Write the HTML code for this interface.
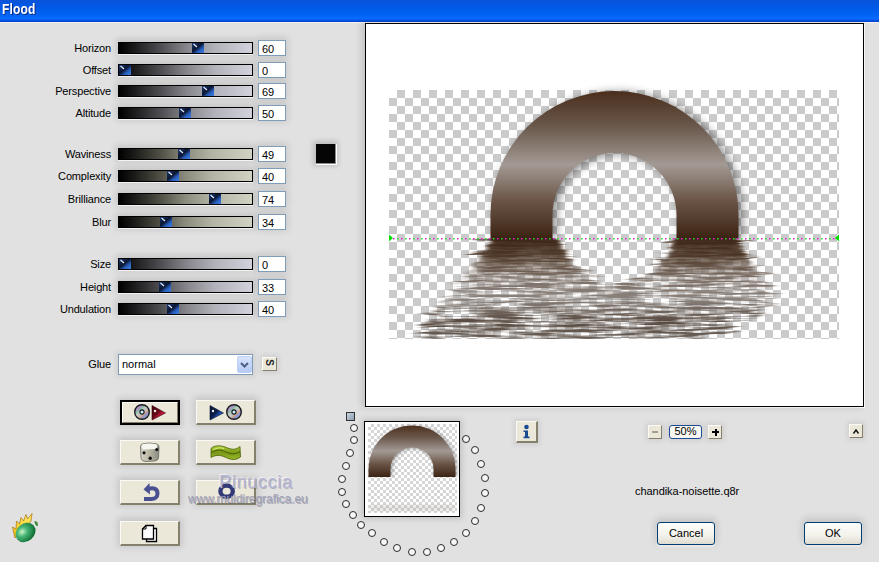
<!DOCTYPE html><html><head><meta charset="utf-8"><style>
*{box-sizing:border-box}
html,body{margin:0;padding:0;width:879px;height:562px;overflow:hidden;background:#e1e1e1;font-family:"Liberation Sans",sans-serif;font-size:11px;color:#000}
.a{position:absolute}
.lbl{position:absolute;text-align:right;width:100px;white-space:nowrap;letter-spacing:-0.15px}
.trk{position:absolute;left:118px;width:135px;height:12px;border:1px solid #000;box-shadow:0 1px 0 #f4f4f4,0 -1px 7px 2px rgba(0,0,0,0.13)}
.thumb{position:absolute;top:0;width:12px;height:10px}
.inp{position:absolute;left:258px;width:28px;height:16px;border:1px solid #7f9db9;background:#fff;padding-left:3px;line-height:16px;box-shadow:0 -1px 7px 2px rgba(0,0,0,0.11)}
.btn{position:absolute;width:60px;height:25px;background:#ebe8da;border-top:1px solid #fbfaf4;border-left:1px solid #fbfaf4;border-right:2px solid #85806c;border-bottom:2px solid #85806c;box-shadow:0 -1px 7px 2px rgba(0,0,0,0.13)}
.sb{position:absolute;width:14px;height:14px;background:#ebe8da;border-top:1px solid #fbfaf4;border-left:1px solid #fbfaf4;border-right:1px solid #85806c;border-bottom:1px solid #85806c;box-shadow:0 0 5px 2px rgba(0,0,0,0.08)}
.xpb{position:absolute;width:58px;height:23px;border:1px solid #003c74;border-radius:3px;background:linear-gradient(#fefefd,#f2f1ea 60%,#dedcd0);text-align:center;line-height:21px;font-size:11px;box-shadow:0 -2px 7px 2px rgba(0,0,0,0.12),0 2px 2px rgba(255,255,255,0.7)}
.dot{position:absolute;width:8.6px;height:8.6px;border:1.5px solid #2a2a2a;border-radius:50%;background:#f6f6f6}
</style></head><body>

<div class="a" style="left:0;top:0;width:879px;height:22px;background:linear-gradient(#0a54d8 0%,#0058e6 30%,#0062f2 65%,#0a6cff 85%,#003fc8 100%)"></div>
<div class="a" style="left:0;top:22px;width:879px;height:1px;background:#f4f1ee"></div>
<div class="a" style="left:2px;top:1px;font-size:14px;font-weight:bold;color:#fff;text-shadow:1px 1px 0 #0a2880;letter-spacing:0.2px;transform:scaleX(0.86);transform-origin:0 0">Flood</div>

<div class="lbl" style="left:11px;top:42px">Horizon</div>
<div class="trk" style="top:42px;background:linear-gradient(90deg,#000 0%,#1c1c1e 12%,#505054 32%,#88888e 52%,#b2b2ba 72%,#d2d2dc 100%)"><div class="thumb" style="left:73px"><svg width="12" height="10" viewBox="0 0 12 10" style="display:block"><defs><linearGradient id="tg" x1="0" y1="0" x2="1" y2="1"><stop offset="0" stop-color="#1a3a78"/><stop offset="0.45" stop-color="#0a1530"/><stop offset="0.7" stop-color="#2a60c0"/><stop offset="1" stop-color="#3a80e0"/></linearGradient></defs><rect width="12" height="10" fill="url(#tg)"/><line x1="1.5" y1="1" x2="5" y2="4" stroke="#e8eef8" stroke-width="1.2"/></svg></div></div>
<div class="inp" style="top:40px">60</div>
<div class="lbl" style="left:11px;top:64px">Offset</div>
<div class="trk" style="top:64px;background:linear-gradient(90deg,#000 0%,#1c1c1e 12%,#505054 32%,#88888e 52%,#b2b2ba 72%,#d2d2dc 100%)"><div class="thumb" style="left:0px"><svg width="12" height="10" viewBox="0 0 12 10" style="display:block"><defs><linearGradient id="tg" x1="0" y1="0" x2="1" y2="1"><stop offset="0" stop-color="#1a3a78"/><stop offset="0.45" stop-color="#0a1530"/><stop offset="0.7" stop-color="#2a60c0"/><stop offset="1" stop-color="#3a80e0"/></linearGradient></defs><rect width="12" height="10" fill="url(#tg)"/><line x1="1.5" y1="1" x2="5" y2="4" stroke="#e8eef8" stroke-width="1.2"/></svg></div></div>
<div class="inp" style="top:62px">0</div>
<div class="lbl" style="left:11px;top:85px">Perspective</div>
<div class="trk" style="top:85px;background:linear-gradient(90deg,#000 0%,#1c1c1e 12%,#505054 32%,#88888e 52%,#b2b2ba 72%,#d2d2dc 100%)"><div class="thumb" style="left:83px"><svg width="12" height="10" viewBox="0 0 12 10" style="display:block"><defs><linearGradient id="tg" x1="0" y1="0" x2="1" y2="1"><stop offset="0" stop-color="#1a3a78"/><stop offset="0.45" stop-color="#0a1530"/><stop offset="0.7" stop-color="#2a60c0"/><stop offset="1" stop-color="#3a80e0"/></linearGradient></defs><rect width="12" height="10" fill="url(#tg)"/><line x1="1.5" y1="1" x2="5" y2="4" stroke="#e8eef8" stroke-width="1.2"/></svg></div></div>
<div class="inp" style="top:83px">69</div>
<div class="lbl" style="left:11px;top:107px">Altitude</div>
<div class="trk" style="top:107px;background:linear-gradient(90deg,#000 0%,#1c1c1e 12%,#505054 32%,#88888e 52%,#b2b2ba 72%,#d2d2dc 100%)"><div class="thumb" style="left:60px"><svg width="12" height="10" viewBox="0 0 12 10" style="display:block"><defs><linearGradient id="tg" x1="0" y1="0" x2="1" y2="1"><stop offset="0" stop-color="#1a3a78"/><stop offset="0.45" stop-color="#0a1530"/><stop offset="0.7" stop-color="#2a60c0"/><stop offset="1" stop-color="#3a80e0"/></linearGradient></defs><rect width="12" height="10" fill="url(#tg)"/><line x1="1.5" y1="1" x2="5" y2="4" stroke="#e8eef8" stroke-width="1.2"/></svg></div></div>
<div class="inp" style="top:105px">50</div>
<div class="lbl" style="left:11px;top:148px">Waviness</div>
<div class="trk" style="top:148px;background:linear-gradient(90deg,#000 0%,#1c1c1a 12%,#525248 32%,#8c8c7e 50%,#b4b4a4 70%,#d2d2c2 100%)"><div class="thumb" style="left:59px"><svg width="12" height="10" viewBox="0 0 12 10" style="display:block"><defs><linearGradient id="tg" x1="0" y1="0" x2="1" y2="1"><stop offset="0" stop-color="#1a3a78"/><stop offset="0.45" stop-color="#0a1530"/><stop offset="0.7" stop-color="#2a60c0"/><stop offset="1" stop-color="#3a80e0"/></linearGradient></defs><rect width="12" height="10" fill="url(#tg)"/><line x1="1.5" y1="1" x2="5" y2="4" stroke="#e8eef8" stroke-width="1.2"/></svg></div></div>
<div class="inp" style="top:146px">49</div>
<div class="lbl" style="left:11px;top:170px">Complexity</div>
<div class="trk" style="top:170px;background:linear-gradient(90deg,#000 0%,#1c1c1a 12%,#525248 32%,#8c8c7e 50%,#b4b4a4 70%,#d2d2c2 100%)"><div class="thumb" style="left:48px"><svg width="12" height="10" viewBox="0 0 12 10" style="display:block"><defs><linearGradient id="tg" x1="0" y1="0" x2="1" y2="1"><stop offset="0" stop-color="#1a3a78"/><stop offset="0.45" stop-color="#0a1530"/><stop offset="0.7" stop-color="#2a60c0"/><stop offset="1" stop-color="#3a80e0"/></linearGradient></defs><rect width="12" height="10" fill="url(#tg)"/><line x1="1.5" y1="1" x2="5" y2="4" stroke="#e8eef8" stroke-width="1.2"/></svg></div></div>
<div class="inp" style="top:168px">40</div>
<div class="lbl" style="left:11px;top:193px">Brilliance</div>
<div class="trk" style="top:193px;background:linear-gradient(90deg,#000 0%,#1c1c1a 12%,#525248 32%,#8c8c7e 50%,#b4b4a4 70%,#d2d2c2 100%)"><div class="thumb" style="left:90px"><svg width="12" height="10" viewBox="0 0 12 10" style="display:block"><defs><linearGradient id="tg" x1="0" y1="0" x2="1" y2="1"><stop offset="0" stop-color="#1a3a78"/><stop offset="0.45" stop-color="#0a1530"/><stop offset="0.7" stop-color="#2a60c0"/><stop offset="1" stop-color="#3a80e0"/></linearGradient></defs><rect width="12" height="10" fill="url(#tg)"/><line x1="1.5" y1="1" x2="5" y2="4" stroke="#e8eef8" stroke-width="1.2"/></svg></div></div>
<div class="inp" style="top:191px">74</div>
<div class="lbl" style="left:11px;top:216px">Blur</div>
<div class="trk" style="top:216px;background:linear-gradient(90deg,#000 0%,#1c1c1a 12%,#525248 32%,#8c8c7e 50%,#b4b4a4 70%,#d2d2c2 100%)"><div class="thumb" style="left:41px"><svg width="12" height="10" viewBox="0 0 12 10" style="display:block"><defs><linearGradient id="tg" x1="0" y1="0" x2="1" y2="1"><stop offset="0" stop-color="#1a3a78"/><stop offset="0.45" stop-color="#0a1530"/><stop offset="0.7" stop-color="#2a60c0"/><stop offset="1" stop-color="#3a80e0"/></linearGradient></defs><rect width="12" height="10" fill="url(#tg)"/><line x1="1.5" y1="1" x2="5" y2="4" stroke="#e8eef8" stroke-width="1.2"/></svg></div></div>
<div class="inp" style="top:214px">34</div>
<div class="lbl" style="left:11px;top:258px">Size</div>
<div class="trk" style="top:258px;background:linear-gradient(90deg,#000 0%,#1c1c1e 12%,#505054 32%,#88888e 52%,#b2b2ba 72%,#d2d2dc 100%)"><div class="thumb" style="left:0px"><svg width="12" height="10" viewBox="0 0 12 10" style="display:block"><defs><linearGradient id="tg" x1="0" y1="0" x2="1" y2="1"><stop offset="0" stop-color="#1a3a78"/><stop offset="0.45" stop-color="#0a1530"/><stop offset="0.7" stop-color="#2a60c0"/><stop offset="1" stop-color="#3a80e0"/></linearGradient></defs><rect width="12" height="10" fill="url(#tg)"/><line x1="1.5" y1="1" x2="5" y2="4" stroke="#e8eef8" stroke-width="1.2"/></svg></div></div>
<div class="inp" style="top:256px">0</div>
<div class="lbl" style="left:11px;top:281px">Height</div>
<div class="trk" style="top:281px;background:linear-gradient(90deg,#000 0%,#1c1c1e 12%,#505054 32%,#88888e 52%,#b2b2ba 72%,#d2d2dc 100%)"><div class="thumb" style="left:40px"><svg width="12" height="10" viewBox="0 0 12 10" style="display:block"><defs><linearGradient id="tg" x1="0" y1="0" x2="1" y2="1"><stop offset="0" stop-color="#1a3a78"/><stop offset="0.45" stop-color="#0a1530"/><stop offset="0.7" stop-color="#2a60c0"/><stop offset="1" stop-color="#3a80e0"/></linearGradient></defs><rect width="12" height="10" fill="url(#tg)"/><line x1="1.5" y1="1" x2="5" y2="4" stroke="#e8eef8" stroke-width="1.2"/></svg></div></div>
<div class="inp" style="top:279px">33</div>
<div class="lbl" style="left:11px;top:303px">Undulation</div>
<div class="trk" style="top:303px;background:linear-gradient(90deg,#000 0%,#1c1c1e 12%,#505054 32%,#88888e 52%,#b2b2ba 72%,#d2d2dc 100%)"><div class="thumb" style="left:48px"><svg width="12" height="10" viewBox="0 0 12 10" style="display:block"><defs><linearGradient id="tg" x1="0" y1="0" x2="1" y2="1"><stop offset="0" stop-color="#1a3a78"/><stop offset="0.45" stop-color="#0a1530"/><stop offset="0.7" stop-color="#2a60c0"/><stop offset="1" stop-color="#3a80e0"/></linearGradient></defs><rect width="12" height="10" fill="url(#tg)"/><line x1="1.5" y1="1" x2="5" y2="4" stroke="#e8eef8" stroke-width="1.2"/></svg></div></div>
<div class="inp" style="top:301px">40</div>
<div class="a" style="left:316px;top:144px;width:21px;height:21px;background:#fff;box-shadow:-1px -1px 5px 2px rgba(0,0,0,0.16)"><div style="width:20px;height:20px;background:#050505;border-right:1px solid #8a8a8a;border-bottom:1px solid #8a8a8a"></div></div>
<div class="lbl" style="left:11px;top:358px">Glue</div>
<div class="a" style="left:118px;top:354px;width:135px;height:21px;border:1px solid #7f9db9;background:#fff;box-shadow:0 0 5px 2px rgba(0,0,0,0.08)">
<div class="a" style="left:3px;top:3px">normal</div>
<div class="a" style="left:118px;top:1px;width:15px;height:17px;background:linear-gradient(#d8e4fc,#b4c8f4);border:1px solid #bcd0f8;border-radius:2px">
<svg width="15" height="17" style="position:absolute;left:-1px;top:-1px"><polyline points="4,7 7.5,10.5 11,7" fill="none" stroke="#4d6185" stroke-width="2"/></svg></div></div>
<div class="sb" style="left:262px;top:357px;width:15px;height:14px"><div style="position:absolute;left:3px;top:-1px;font-size:10px;font-weight:bold;transform:rotate(90deg);color:#222">S</div></div>
<div class="a" style="left:120px;top:400px;width:60px;height:25px;border:2px solid #000;box-shadow:0 0 6px 2px rgba(0,0,0,0.12)"><div class="btn" style="left:0;top:0;width:56px;height:21px;box-shadow:none;border-right-width:1px;border-bottom-width:1px"></div></div>
<div class="btn" style="left:196px;top:400px;"></div>
<div class="btn" style="left:120px;top:440px;"></div>
<div class="btn" style="left:196px;top:440px;"></div>
<div class="btn" style="left:120px;top:480px;"></div>
<div class="btn" style="left:196px;top:480px;"></div>
<div class="btn" style="left:120px;top:521px;"></div>
<svg class="a" style="left:0;top:0" width="879" height="562">
<defs>
<linearGradient id="cdr" x1="0.15" y1="0.1" x2="0.85" y2="0.9">
<stop offset="0" stop-color="#a8a8b4"/><stop offset="0.2" stop-color="#b090c8"/><stop offset="0.3" stop-color="#80c8a0"/><stop offset="0.4" stop-color="#c8c8c4"/>
<stop offset="0.6" stop-color="#c0c0c0"/><stop offset="0.7" stop-color="#d8a080"/><stop offset="0.8" stop-color="#8898d8"/><stop offset="1" stop-color="#a0a0a8"/></linearGradient>
<linearGradient id="trr" x1="0" y1="0" x2="1" y2="1"><stop offset="0" stop-color="#3a0008"/><stop offset="0.45" stop-color="#6a0818"/><stop offset="0.65" stop-color="#c01838"/><stop offset="1" stop-color="#e03050"/></linearGradient>
<linearGradient id="trb" x1="0" y1="0" x2="1" y2="1"><stop offset="0" stop-color="#081838"/><stop offset="0.45" stop-color="#0a1c48"/><stop offset="0.65" stop-color="#2050b0"/><stop offset="1" stop-color="#3070d0"/></linearGradient>
<linearGradient id="dice" x1="0" y1="0" x2="1" y2="0"><stop offset="0" stop-color="#d8d6cc"/><stop offset="0.5" stop-color="#b8b4a0"/><stop offset="1" stop-color="#8a8a84"/></linearGradient>
<linearGradient id="wv" x1="0" y1="0" x2="0" y2="1"><stop offset="0" stop-color="#b0d038"/><stop offset="0.5" stop-color="#7a9818"/><stop offset="1" stop-color="#98b828"/></linearGradient>
<radialGradient id="egg" cx="0.4" cy="0.35" r="0.7"><stop offset="0" stop-color="#d0f4c8"/><stop offset="0.35" stop-color="#48b878"/><stop offset="1" stop-color="#086428"/></radialGradient>
<linearGradient id="flame" x1="0" y1="0" x2="0" y2="1"><stop offset="0" stop-color="#fff070"/><stop offset="1" stop-color="#f0b800"/></linearGradient>
</defs>
<circle cx="142" cy="412" r="7.2" fill="#b8b8bc"/><circle cx="142" cy="412" r="7.2" fill="url(#cdr)"/><circle cx="142" cy="412" r="7.3" fill="none" stroke="#1a1a1e" stroke-width="1.4"/><circle cx="142" cy="412" r="2.1" fill="#cfeff8" stroke="#101820" stroke-width="1.1"/>
<path d="M152,405.5 L165.5,413 L152,420 Z" fill="url(#trr)" stroke="#3a0010" stroke-width="0.6"/>
<circle cx="155" cy="411" r="1.2" fill="#f0f0f0"/>
<path d="M210,405.5 L223.5,413 L210,420 Z" fill="url(#trb)" stroke="#0a1430" stroke-width="0.6"/>
<circle cx="213" cy="411" r="1.2" fill="#f0f0f0"/>
<circle cx="234" cy="412" r="7.2" fill="#b8b8bc"/><circle cx="234" cy="412" r="7.2" fill="url(#cdr)"/><circle cx="234" cy="412" r="7.3" fill="none" stroke="#1a1a1e" stroke-width="1.4"/><circle cx="234" cy="412" r="2.1" fill="#cfeff8" stroke="#101820" stroke-width="1.1"/>
<path d="M142,444 Q149,442 157,444 Q159.5,445 159,448 L158.5,458 Q158,460.5 155,461 L146,461.5 Q141.5,461.5 141,458 L140.5,447 Q140.5,444.5 142,444 Z" fill="url(#dice)" stroke="#6a6a60" stroke-width="0.8"/>
<path d="M142,444.5 Q149,442.5 157,444.5 Q158,446 156,449 L143,449.5 Q141,447 142,444.5 Z" fill="#f6f6f0"/>
<circle cx="144" cy="452.8" r="1.6" fill="#111"/><circle cx="150.2" cy="458.2" r="1.7" fill="#111"/><circle cx="156.8" cy="449.6" r="1.6" fill="#111"/>
<path d="M211,448.5 C214,445.5 219,445 225,447 C230,449 235,451 240,446.5 L240.5,457 C236,460.5 231,460 226,457.5 C220,454.5 215,455 211,457.5 Z" fill="url(#wv)" stroke="#4a6008" stroke-width="0.8"/>
<path d="M211.5,452.5 C216,449.5 221,449.5 226,452 C231,454.5 235,455 240,451.5" fill="none" stroke="#506a08" stroke-width="1.1"/>
<path d="M213,450 C217,447.5 221,447.5 224,448.5" fill="none" stroke="#d8f080" stroke-width="1"/>
<path d="M149.5,483 L143.5,489.5 L150,494.5 Z" fill="#4a5090"/>
<path d="M147.5,489.5 C154,486.5 157.5,489.5 157.5,493.5 C157.5,497 155,499 151.5,499 L144,499" fill="none" stroke="#4a5090" stroke-width="4"/>
<ellipse cx="226.6" cy="491.2" rx="6.2" ry="5.6" fill="none" stroke="#343a78" stroke-width="4.4"/>
<path d="M146.5,528.5 L156.5,528.5 L156.5,541.5 L146.5,541.5 Z" fill="#fff" stroke="#000" stroke-width="1.3"/>
<path d="M142.5,529 L146,525.5 L153.5,525.5 L153.5,539 L142.5,539 Z" fill="#fff" stroke="#000" stroke-width="1.3"/>
<path d="M142.5,529 L146,529 L146,525.5" fill="none" stroke="#000" stroke-width="1"/>
<path d="M15,538 L12.5,527 L16,529 L16.5,521 L19.5,524 L21,517.5 L23.5,521 L26,514.5 L27.5,519 L32,513.5 L31,521 L26,527 Z" fill="url(#flame)" stroke="#a87008" stroke-width="0.7"/>
<ellipse cx="25.5" cy="532.5" rx="10.8" ry="8.8" transform="rotate(-40 25.5 532.5)" fill="url(#egg)"/>
<path d="M34.5,521 C37.5,521 38.5,524 37.5,526.5 C35.5,525.5 34.5,523.5 34.5,521Z" fill="#3a8a30"/>
</svg>
<div class="a" style="left:219px;top:472px;font-size:18px;color:#b4b4d4;letter-spacing:0.7px;text-shadow:1px 1px 0 rgba(90,90,110,0.35),-1px -1px 1px rgba(255,255,255,0.6)">Pinuccia</div>
<div class="a" style="left:188px;top:492px;font-size:12px;color:#a0a0b8;letter-spacing:-0.05px;text-shadow:1px 1px 0 rgba(80,80,100,0.4)">www.muldiregrafica.eu</div>
<div class="dot" style="left:349.7px;top:423.7px"></div>
<div class="dot" style="left:349.7px;top:435.7px"></div>
<div class="dot" style="left:345.7px;top:448.7px"></div>
<div class="dot" style="left:341.7px;top:461.7px"></div>
<div class="dot" style="left:337.7px;top:474.7px"></div>
<div class="dot" style="left:337.7px;top:487.7px"></div>
<div class="dot" style="left:341.7px;top:499.7px"></div>
<div class="dot" style="left:348.7px;top:510.7px"></div>
<div class="dot" style="left:356.7px;top:520.7px"></div>
<div class="dot" style="left:367.7px;top:528.7px"></div>
<div class="dot" style="left:379.7px;top:537.7px"></div>
<div class="dot" style="left:392.7px;top:543.7px"></div>
<div class="dot" style="left:407.7px;top:547.7px"></div>
<div class="dot" style="left:422.7px;top:547.7px"></div>
<div class="dot" style="left:436.7px;top:543.7px"></div>
<div class="dot" style="left:449.7px;top:537.7px"></div>
<div class="dot" style="left:461.7px;top:528.7px"></div>
<div class="dot" style="left:470.7px;top:516.7px"></div>
<div class="dot" style="left:476.7px;top:503.7px"></div>
<div class="dot" style="left:480.7px;top:488.7px"></div>
<div class="dot" style="left:480.7px;top:473.7px"></div>
<div class="dot" style="left:476.7px;top:459.7px"></div>
<div class="dot" style="left:470.7px;top:445.7px"></div>
<div class="dot" style="left:461.7px;top:434.7px"></div>
<div class="a" style="left:346px;top:412px;width:8.5px;height:8.5px;border:1px solid #333;background:linear-gradient(135deg,#c8d4e0,#8c9cb0)"></div>
<div class="a" style="left:365px;top:23px;width:499px;height:384px;border:1px solid #000;background:#fff;box-shadow:-3px 0 6px 1px rgba(0,0,0,0.12),1px 1px 0 #fff"></div>
<svg class="a" style="left:0;top:0" width="879" height="562">
<defs>
<pattern id="chk" x="389" y="90" width="16" height="16" patternUnits="userSpaceOnUse"><rect width="16" height="16" fill="#fff"/><rect x="8" y="0" width="8" height="8" fill="#cbcbcb"/><rect x="0" y="8" width="8" height="8" fill="#cbcbcb"/></pattern>
<linearGradient id="ag" gradientUnits="userSpaceOnUse" x1="0" y1="91" x2="0" y2="238">
<stop offset="0" stop-color="#4a2e1c"/><stop offset="0.25" stop-color="#6c5a4e"/><stop offset="0.5" stop-color="#a39a94"/><stop offset="0.75" stop-color="#6a5446"/><stop offset="1" stop-color="#3c2414"/></linearGradient>
<linearGradient id="rg" gradientUnits="userSpaceOnUse" x1="0" y1="238" x2="0" y2="339">
<stop offset="0" stop-color="#3c2414"/><stop offset="0.18" stop-color="#4e3828"/><stop offset="0.38" stop-color="#7a6c62"/><stop offset="0.6" stop-color="#8a827c"/><stop offset="0.82" stop-color="#5a4c42"/><stop offset="1" stop-color="#6a6058"/></linearGradient>
<linearGradient id="mg" gradientUnits="userSpaceOnUse" x1="0" y1="238" x2="0" y2="285"><stop offset="0" stop-color="#fff"/><stop offset="0.4" stop-color="#fff" stop-opacity="0.8"/><stop offset="1" stop-color="#fff" stop-opacity="0"/></linearGradient>
<mask id="tm" maskUnits="userSpaceOnUse" x="380" y="230" width="470" height="120"><rect x="380" y="238" width="470" height="60" fill="url(#mg)"/></mask>
<filter id="shd" x="-20%" y="-20%" width="140%" height="140%"><feGaussianBlur stdDeviation="5"/></filter>
<filter id="wave" x="-40%" y="-10%" width="180%" height="130%" color-interpolation-filters="sRGB">
<feTurbulence type="fractalNoise" baseFrequency="0.014 0.26" numOctaves="3" seed="5" result="t"/>
<feColorMatrix in="t" type="matrix" values="1 0 0 0 0  0 0 0 0 0.5  0 0 0 0 0  0 0 0 0 1" result="tm"/>
<feDisplacementMap in="SourceGraphic" in2="tm" scale="60" xChannelSelector="R" yChannelSelector="G" result="d"/>
<feGaussianBlur in="d" stdDeviation="3 0.5" result="b"/>
<feTurbulence type="fractalNoise" baseFrequency="0.025 0.4" numOctaves="2" seed="11" result="t2"/>
<feColorMatrix in="t2" type="matrix" values="0 0 0 0 0  0 0 0 0 0  0 0 0 0 0  3.0 0 0 0 -0.92" result="am"/>
<feComposite in="b" in2="am" operator="in"/>
</filter>
<filter id="wave2" x="-40%" y="-10%" width="180%" height="130%" color-interpolation-filters="sRGB">
<feTurbulence type="fractalNoise" baseFrequency="0.012 0.2" numOctaves="3" seed="8" result="t"/>
<feColorMatrix in="t" type="matrix" values="1 0 0 0 0  0 0 0 0 0.5  0 0 0 0 0  0 0 0 0 1" result="tm"/>
<feDisplacementMap in="SourceGraphic" in2="tm" scale="14" xChannelSelector="R" yChannelSelector="G" result="d"/>
<feGaussianBlur in="d" stdDeviation="2 0.5" result="b"/>
<feTurbulence type="fractalNoise" baseFrequency="0.03 0.4" numOctaves="2" seed="13" result="t2"/>
<feColorMatrix in="t2" type="matrix" values="0 0 0 0 0  0 0 0 0 0  0 0 0 0 0  0 0 0 0 1" result="am"/>
<feComposite in="b" in2="am" operator="in"/>
</filter>
<linearGradient id="lg" gradientUnits="userSpaceOnUse" x1="0" y1="238" x2="0" y2="292">
<stop offset="0" stop-color="#3a2212" stop-opacity="1"/><stop offset="0.5" stop-color="#4a3424" stop-opacity="0.85"/><stop offset="1" stop-color="#6a5a50" stop-opacity="0"/></linearGradient>
</defs>
<rect x="389" y="90" width="450" height="249" fill="url(#chk)"/>
<path d="M494.5,238 L494.5,216 A124,124 0 0 1 742.5,216 L742.5,238 L680.5,238 L680.5,216 A62,62 0 0 0 556.5,216 L556.5,238 Z" fill="#000" opacity="0.45" filter="url(#shd)"/>
<rect x="389" y="238" width="450" height="101" fill="url(#chk)"/>
<g mask="url(#tm)"><g filter="url(#wave2)"><path d="M491,238 L484,256 L462,278 L444,300 L428,320 L420,339 L705,339 L742,326 L772,306 L764,284 L748,260 L738,238 L675,238 L668,256 L652,274 L618,286 L590,279 L570,262 L556,238 Z" fill="url(#rg)"/></g></g>
<g filter="url(#wave)"><path d="M491,238 L484,256 L462,278 L444,300 L428,320 L420,339 L705,339 L742,326 L772,306 L764,284 L748,260 L738,238 L675,238 L668,256 L652,274 L618,286 L590,279 L570,262 L556,238 Z" fill="url(#rg)"/></g>
<path d="M490.5,238 L490.5,215 A124,124 0 0 1 738.5,215 L738.5,238 L676.5,238 L676.5,215 A62,62 0 0 0 552.5,215 L552.5,238 Z" fill="url(#ag)"/>
<rect x="393" y="238" width="1.5" height="1.5" fill="#e020e0"/><rect x="397" y="238" width="1.5" height="1.5" fill="#20e020"/><rect x="401" y="238" width="1.5" height="1.5" fill="#e020e0"/><rect x="405" y="238" width="1.5" height="1.5" fill="#20e020"/><rect x="409" y="238" width="1.5" height="1.5" fill="#e020e0"/><rect x="413" y="238" width="1.5" height="1.5" fill="#20e020"/><rect x="417" y="238" width="1.5" height="1.5" fill="#e020e0"/><rect x="421" y="238" width="1.5" height="1.5" fill="#20e020"/><rect x="425" y="238" width="1.5" height="1.5" fill="#e020e0"/><rect x="429" y="238" width="1.5" height="1.5" fill="#20e020"/><rect x="433" y="238" width="1.5" height="1.5" fill="#e020e0"/><rect x="437" y="238" width="1.5" height="1.5" fill="#20e020"/><rect x="441" y="238" width="1.5" height="1.5" fill="#e020e0"/><rect x="445" y="238" width="1.5" height="1.5" fill="#20e020"/><rect x="449" y="238" width="1.5" height="1.5" fill="#e020e0"/><rect x="453" y="238" width="1.5" height="1.5" fill="#20e020"/><rect x="457" y="238" width="1.5" height="1.5" fill="#e020e0"/><rect x="461" y="238" width="1.5" height="1.5" fill="#20e020"/><rect x="465" y="238" width="1.5" height="1.5" fill="#e020e0"/><rect x="469" y="238" width="1.5" height="1.5" fill="#20e020"/><rect x="473" y="238" width="1.5" height="1.5" fill="#e020e0"/><rect x="477" y="238" width="1.5" height="1.5" fill="#20e020"/><rect x="481" y="238" width="1.5" height="1.5" fill="#e020e0"/><rect x="485" y="238" width="1.5" height="1.5" fill="#20e020"/><rect x="489" y="238" width="1.5" height="1.5" fill="#e020e0"/><rect x="493" y="238" width="1.5" height="1.5" fill="#20e020"/><rect x="497" y="238" width="1.5" height="1.5" fill="#e020e0"/><rect x="501" y="238" width="1.5" height="1.5" fill="#20e020"/><rect x="505" y="238" width="1.5" height="1.5" fill="#e020e0"/><rect x="509" y="238" width="1.5" height="1.5" fill="#20e020"/><rect x="513" y="238" width="1.5" height="1.5" fill="#e020e0"/><rect x="517" y="238" width="1.5" height="1.5" fill="#20e020"/><rect x="521" y="238" width="1.5" height="1.5" fill="#e020e0"/><rect x="525" y="238" width="1.5" height="1.5" fill="#20e020"/><rect x="529" y="238" width="1.5" height="1.5" fill="#e020e0"/><rect x="533" y="238" width="1.5" height="1.5" fill="#20e020"/><rect x="537" y="238" width="1.5" height="1.5" fill="#e020e0"/><rect x="541" y="238" width="1.5" height="1.5" fill="#20e020"/><rect x="545" y="238" width="1.5" height="1.5" fill="#e020e0"/><rect x="549" y="238" width="1.5" height="1.5" fill="#20e020"/><rect x="553" y="238" width="1.5" height="1.5" fill="#e020e0"/><rect x="557" y="238" width="1.5" height="1.5" fill="#20e020"/><rect x="561" y="238" width="1.5" height="1.5" fill="#e020e0"/><rect x="565" y="238" width="1.5" height="1.5" fill="#20e020"/><rect x="569" y="238" width="1.5" height="1.5" fill="#e020e0"/><rect x="573" y="238" width="1.5" height="1.5" fill="#20e020"/><rect x="577" y="238" width="1.5" height="1.5" fill="#e020e0"/><rect x="581" y="238" width="1.5" height="1.5" fill="#20e020"/><rect x="585" y="238" width="1.5" height="1.5" fill="#e020e0"/><rect x="589" y="238" width="1.5" height="1.5" fill="#20e020"/><rect x="593" y="238" width="1.5" height="1.5" fill="#e020e0"/><rect x="597" y="238" width="1.5" height="1.5" fill="#20e020"/><rect x="601" y="238" width="1.5" height="1.5" fill="#e020e0"/><rect x="605" y="238" width="1.5" height="1.5" fill="#20e020"/><rect x="609" y="238" width="1.5" height="1.5" fill="#e020e0"/><rect x="613" y="238" width="1.5" height="1.5" fill="#20e020"/><rect x="617" y="238" width="1.5" height="1.5" fill="#e020e0"/><rect x="621" y="238" width="1.5" height="1.5" fill="#20e020"/><rect x="625" y="238" width="1.5" height="1.5" fill="#e020e0"/><rect x="629" y="238" width="1.5" height="1.5" fill="#20e020"/><rect x="633" y="238" width="1.5" height="1.5" fill="#e020e0"/><rect x="637" y="238" width="1.5" height="1.5" fill="#20e020"/><rect x="641" y="238" width="1.5" height="1.5" fill="#e020e0"/><rect x="645" y="238" width="1.5" height="1.5" fill="#20e020"/><rect x="649" y="238" width="1.5" height="1.5" fill="#e020e0"/><rect x="653" y="238" width="1.5" height="1.5" fill="#20e020"/><rect x="657" y="238" width="1.5" height="1.5" fill="#e020e0"/><rect x="661" y="238" width="1.5" height="1.5" fill="#20e020"/><rect x="665" y="238" width="1.5" height="1.5" fill="#e020e0"/><rect x="669" y="238" width="1.5" height="1.5" fill="#20e020"/><rect x="673" y="238" width="1.5" height="1.5" fill="#e020e0"/><rect x="677" y="238" width="1.5" height="1.5" fill="#20e020"/><rect x="681" y="238" width="1.5" height="1.5" fill="#e020e0"/><rect x="685" y="238" width="1.5" height="1.5" fill="#20e020"/><rect x="689" y="238" width="1.5" height="1.5" fill="#e020e0"/><rect x="693" y="238" width="1.5" height="1.5" fill="#20e020"/><rect x="697" y="238" width="1.5" height="1.5" fill="#e020e0"/><rect x="701" y="238" width="1.5" height="1.5" fill="#20e020"/><rect x="705" y="238" width="1.5" height="1.5" fill="#e020e0"/><rect x="709" y="238" width="1.5" height="1.5" fill="#20e020"/><rect x="713" y="238" width="1.5" height="1.5" fill="#e020e0"/><rect x="717" y="238" width="1.5" height="1.5" fill="#20e020"/><rect x="721" y="238" width="1.5" height="1.5" fill="#e020e0"/><rect x="725" y="238" width="1.5" height="1.5" fill="#20e020"/><rect x="729" y="238" width="1.5" height="1.5" fill="#e020e0"/><rect x="733" y="238" width="1.5" height="1.5" fill="#20e020"/><rect x="737" y="238" width="1.5" height="1.5" fill="#e020e0"/><rect x="741" y="238" width="1.5" height="1.5" fill="#20e020"/><rect x="745" y="238" width="1.5" height="1.5" fill="#e020e0"/><rect x="749" y="238" width="1.5" height="1.5" fill="#20e020"/><rect x="753" y="238" width="1.5" height="1.5" fill="#e020e0"/><rect x="757" y="238" width="1.5" height="1.5" fill="#20e020"/><rect x="761" y="238" width="1.5" height="1.5" fill="#e020e0"/><rect x="765" y="238" width="1.5" height="1.5" fill="#20e020"/><rect x="769" y="238" width="1.5" height="1.5" fill="#e020e0"/><rect x="773" y="238" width="1.5" height="1.5" fill="#20e020"/><rect x="777" y="238" width="1.5" height="1.5" fill="#e020e0"/><rect x="781" y="238" width="1.5" height="1.5" fill="#20e020"/><rect x="785" y="238" width="1.5" height="1.5" fill="#e020e0"/><rect x="789" y="238" width="1.5" height="1.5" fill="#20e020"/><rect x="793" y="238" width="1.5" height="1.5" fill="#e020e0"/><rect x="797" y="238" width="1.5" height="1.5" fill="#20e020"/><rect x="801" y="238" width="1.5" height="1.5" fill="#e020e0"/><rect x="805" y="238" width="1.5" height="1.5" fill="#20e020"/><rect x="809" y="238" width="1.5" height="1.5" fill="#e020e0"/><rect x="813" y="238" width="1.5" height="1.5" fill="#20e020"/><rect x="817" y="238" width="1.5" height="1.5" fill="#e020e0"/><rect x="821" y="238" width="1.5" height="1.5" fill="#20e020"/><rect x="825" y="238" width="1.5" height="1.5" fill="#e020e0"/><rect x="829" y="238" width="1.5" height="1.5" fill="#20e020"/><rect x="833" y="238" width="1.5" height="1.5" fill="#e020e0"/><rect x="837" y="238" width="1.5" height="1.5" fill="#20e020"/>
<path d="M389,234.5 L393,238 L389,241.5 Z" fill="#00e000"/><path d="M839,234.5 L835,238 L839,241.5 Z" fill="#00e000"/>
</svg>
<div class="a" style="left:364px;top:421px;width:96px;height:96px;border:1px solid #000;background:#fff;box-shadow:0 0 6px 2px rgba(0,0,0,0.14)"></div>
<svg class="a" style="left:0;top:0" width="879" height="562">
<defs><pattern id="chk2" x="368" y="424" width="6" height="6" patternUnits="userSpaceOnUse"><rect width="6" height="6" fill="#fff"/><rect x="3" y="0" width="3" height="3" fill="#d6d6d6"/><rect x="0" y="3" width="3" height="3" fill="#d6d6d6"/></pattern>
<linearGradient id="ag2" gradientUnits="userSpaceOnUse" x1="0" y1="425" x2="0" y2="477">
<stop offset="0" stop-color="#4a2e1c"/><stop offset="0.25" stop-color="#6c5a4e"/><stop offset="0.5" stop-color="#a39a94"/><stop offset="0.75" stop-color="#6a5446"/><stop offset="1" stop-color="#3c2414"/></linearGradient>
<filter id="shd2"><feGaussianBlur stdDeviation="2"/></filter></defs>
<rect x="368" y="424" width="89" height="89" fill="url(#chk2)"/>
<path d="M370.0,477 L370.0,469.5 A43.5,43.5 0 0 1 457.0,469.5 L457.0,477 L435.0,477 L435.0,469.5 A21.5,21.5 0 0 0 392.0,469.5 L392.0,477 Z" fill="#000" opacity="0.35" filter="url(#shd2)"/>
<rect x="368" y="477" width="89" height="36" fill="url(#chk2)"/>
<rect x="370" y="505" width="85" height="6" fill="#a8a29e" opacity="0.3" filter="url(#shd2)"/>
<path d="M368.5,477 L368.5,469 A43.5,43.5 0 0 1 455.5,469 L455.5,477 L433.5,477 L433.5,469 A21.5,21.5 0 0 0 390.5,469 L390.5,477 Z" fill="url(#ag2)"/>
</svg>
<div class="sb" style="left:516px;top:421px;width:22px;height:22px;border-right-width:2px;border-bottom-width:2px"><svg class="a" style="left:-1px;top:-1px" width="22" height="22"><circle cx="10.5" cy="6" r="2.3" fill="#1a4c90"/><path d="M7.5,9.5 L12,9.5 L12,15.5 L13.5,15.5 L13.5,17.2 L7.5,17.2 L7.5,15.5 L9,15.5 L9,11 L7.5,11 Z" fill="#1a4c90"/></svg></div>
<div class="sb" style="left:648px;top:425px"><div class="a" style="left:3px;top:5px;width:6px;height:2px;background:#a0a090"></div></div>
<div class="a" style="left:669px;top:425px;width:33px;height:14px;border:1.5px solid #1c4a94;border-radius:3px;background:#f8f8f4;text-align:center;line-height:11px;font-size:11px;box-shadow:0 0 5px 2px rgba(0,0,0,0.08)">50%</div>
<div class="sb" style="left:708px;top:425px"><div class="a" style="left:3px;top:5px;width:7px;height:2px;background:#000"></div><div class="a" style="left:5.5px;top:2.5px;width:2px;height:7px;background:#000"></div></div>
<div class="sb" style="left:849px;top:424px"><svg class="a" style="left:0;top:0" width="13" height="13"><polyline points="3.5,8.5 6,5 8.5,8.5" fill="none" stroke="#111" stroke-width="1.4"/></svg></div>
<div class="a" style="left:635px;top:485px;letter-spacing:-0.05px">chandika-noisette.q8r</div>
<div class="xpb" style="left:657px;top:522px">Cancel</div>
<div class="xpb" style="left:804px;top:522px">OK</div>
</body></html>
